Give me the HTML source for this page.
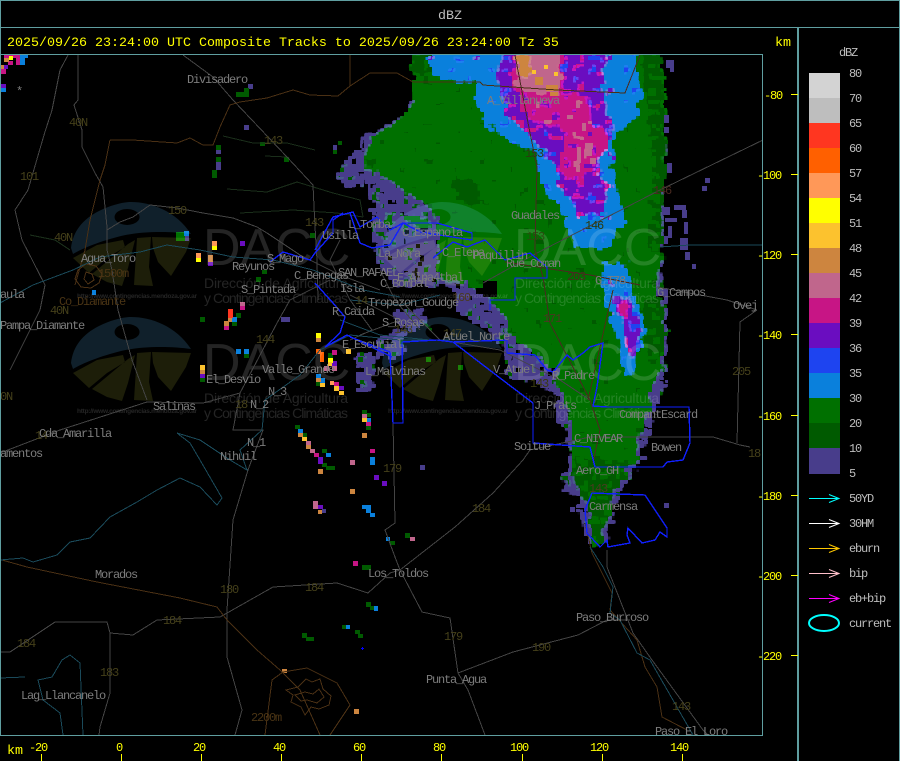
<!DOCTYPE html>
<html><head><meta charset="utf-8"><title>dBZ</title>
<style>
html,body{margin:0;padding:0;background:#000;width:900px;height:761px;overflow:hidden}
svg{display:block}
text{font-family:"Liberation Mono",monospace;white-space:pre}
.l{font-size:12px;letter-spacing:-1.2px;fill:#7d7d7d}
.n{font-size:12px;letter-spacing:-1.2px;fill:#45401a}
.br{font-size:12px;letter-spacing:-1.2px;fill:#4a3414}
.y{font-size:12px;letter-spacing:-1.2px;fill:#ffff00}
.t{font-size:13.33px;fill:#ffff00}
.k{font-size:12px;letter-spacing:-1.2px;fill:#bebebe}
.w{font-family:"Liberation Sans",sans-serif;fill:#fff;fill-opacity:.14;letter-spacing:0}
.c polyline,.c path,.c polygon{fill:none}
.logo{mix-blend-mode:screen}
</style></head><body>
<svg xmlns="http://www.w3.org/2000/svg" width="900" height="761" viewBox="0 0 900 761">
<defs>
<filter id="px" x="0" y="0" width="900" height="761" filterUnits="userSpaceOnUse" color-interpolation-filters="sRGB">
<feTurbulence type="fractalNoise" baseFrequency="0.11" numOctaves="1" seed="11" result="n"/>
<feDisplacementMap in="SourceGraphic" in2="n" scale="15" xChannelSelector="R" yChannelSelector="G" result="d"/>
<feFlood x="1" y="1" width="2" height="2" flood-color="#000"/>
<feComposite width="4" height="4"/>
<feTile result="t"/>
<feComposite in="d" in2="t" operator="in"/>
<feMorphology operator="dilate" radius="1"/>
</filter>
<pattern id="pm" width="40" height="32" patternUnits="userSpaceOnUse">
<rect width="40" height="32" fill="#c71585"/>
<path fill="#6a0dc0" d="M4 0h4v4H4zM24 4h8v4h-8zM12 16h4v4h-4zM32 20h4v4h-4z"/>
<path fill="#c0668c" d="M16 4h4v8h-4zM28 24h4v4h-4z"/>
</pattern>
<pattern id="pb" width="44" height="32" patternUnits="userSpaceOnUse">
<rect width="44" height="32" fill="#6a0dc0"/>
<path fill="#c71585" d="M0 0h12v4H0zM24 8h8v4h-8zM8 20h4v8H8zM32 24h8v4h-8z"/>
<path fill="#1e44f0" d="M16 4h8v4h-8zM36 0h4v8h-4zM0 12h4v4H0zM20 24h8v4h-8z"/>
</pattern>
<pattern id="pl" width="44" height="32" patternUnits="userSpaceOnUse">
<rect width="44" height="32" fill="#0a80dc"/>
<path fill="#1e44f0" d="M8 4h4v4H8zM28 12h4v4h-4zM16 24h8v4h-8z"/>
<path fill="#6a0dc0" d="M36 24h4v4h-4z"/>
</pattern>
<pattern id="pg" width="56" height="40" patternUnits="userSpaceOnUse">
<rect width="56" height="40" fill="#007000"/>
<path fill="#005a00" d="M8 8h4v4H8zM32 0h8v4h-8zM20 28h4v4h-4zM44 20h4v4h-4z"/>
</pattern>
<pattern id="pd" width="24" height="24" patternUnits="userSpaceOnUse">
<rect width="24" height="24" fill="#005a00"/>
<path fill="#007000" d="M4 4h8v4H4zM16 12h4v8h-4zM0 16h8v4H0z"/>
</pattern>
<pattern id="ps" width="32" height="28" patternUnits="userSpaceOnUse">
<rect width="32" height="28" fill="#483d8b"/>
<path fill="#000" d="M4 4h8v4H4zM20 16h4v4h-4zM0 20h4v4H0z"/>
<path fill="#005a00" d="M20 0h4v8h-4zM8 16h4v4H8zM28 8h4v4h-4zM24 24h4v4h-4z"/>
</pattern>
<g id="logo" class="logo">
<path fill="#10202b" fill-rule="evenodd" d="M0 45C2 28 12 16 28 8C40 2 52-1 60-1C80-1 105 8 120 31C100 28 70 28 50 33C30 38 12 45 2 51ZM56 6a12.500 8 0 1 0 .1 0Z"/>
<path fill="#1d1e09" d="M2 55L26 42L52 37L54 44L36 55L18 70ZM57 41L21 71L36 79L51 83L57 65L64 37ZM66 35L63 82L82 83L78 64L80 34ZM81 34L120 35L115 49L100 73L87 59L82 45Z"/>
</g>
</defs>
<rect width="900" height="761" fill="#000"/>

<!-- radar field -->
<g filter="url(#px)">
<polygon fill="url(#ps)" points="416,50 416,85 405,115 385,128 365,135 358,150 345,160 338,172 342,185 358,187 367,180 372,205 372,240 380,270 395,285 440,285 455,293 457,310 480,325 492,335 505,350 505,375 540,385 555,395 557,420 568,432 572,450 565,470 562,492 578,495 578,510 583,525 588,545 606,545 612,522 622,492 640,465 655,410 665,385 668,340 668,295 662,282 664,200 666,150 662,110 658,50"/>
<polygon fill="url(#ps)" points="396,312 425,310 428,326 410,330 400,330"/>
<polygon fill="url(#ps)" points="380,335 405,332 408,350 395,360 375,358"/>
<polygon fill="url(#ps)" points="358,354 375,352 374,375 368,394 358,392"/>
<polygon fill="url(#pg)" points="412,50 415,93 410,110 402,117 393,125 373,135 367,150 365,170 377,170 393,183 413,197 430,207 440,225 440,280 467,283 490,300 503,317 510,333 537,357 557,373 560,390 572,423 573,447 573,457 572,470 577,490 587,503 590,517 590,543 605,545 605,530 610,517 613,493 622,483 627,470 637,463 638,443 643,423 650,407 652,390 658,377 662,357 665,323 662,307 656,283 662,250 662,200 665,167 665,83 660,50"/>
<polygon fill="#007000" points="402,215 428,217 432,228 408,226"/>
<polygon fill="#007000" points="384,216 394,214 392,226 384,224"/>
<polygon fill="url(#pd)" points="412,50 430,50 432,72 420,78 414,74"/>
<polygon fill="url(#pd)" points="642,50 660,50 664,100 666,170 662,205 662,250 650,250 652,190 650,130 644,90"/>
<polygon fill="url(#pd)" points="577,458 637,460 637,466 627,470 622,483 613,493 610,517 605,532 605,545 590,545 590,517 587,503 577,490 572,470"/>
<polygon fill="#005a00" points="453,177 477,180 478,207 456,200"/>
<polygon fill="url(#pd)" points="640,300 664,300 665,345 650,370 645,330"/>
<polygon fill="url(#pl)" points="430,50 430,67 433,73 445,80 477,82 477,100 482,117 493,130 513,143 537,153 540,177 547,190 557,207 568,217 567,230 577,247 610,247 617,233 625,217 617,190 610,167 613,140 617,130 637,117 640,97 637,50"/>
<polygon fill="url(#pl)" points="602,263 627,263 632,295 640,308 644,323 642,345 636,352 632,375 626,377 620,352 615,330 608,310"/>
<polygon fill="url(#pb)" points="503,50 497,77 507,100 507,117 530,133 543,150 557,167 558,183 568,200 580,217 603,217 607,183 597,167 613,133 610,117 603,100 603,77 607,50"/>
<polygon fill="url(#pb)" points="612,296 628,298 638,318 640,340 632,358 626,350 622,325"/>
<polygon fill="url(#pm)" points="517,50 513,80 520,100 527,117 565,130 563,150 560,167 563,180 583,180 593,167 607,150 607,133 590,117 590,100 563,95 563,50"/>
<polygon fill="#c71585" points="616,300 626,300 630,318 622,318"/>
<polygon fill="#c0668c" points="517,50 517,85 525,95 560,95 560,50"/>
<polygon fill="#cd853f" points="518,55 530,55 530,75 518,75"/>
</g>
<!-- holes and orange spots -->
<path fill="#000" d="M483 281h14v16h-14zM476 288h7v6h-7zM405 230h4v4h-4zM418 262h4v4h-4zM432 278h4v4h-4zM516 350h4v4h-4zM540 367h4v4h-4z"/>
<path fill="#483d8b" d="M471 290h5v5h-5zM480 297h5v5h-5zM662 207h8v8h-8zM674 205h12v5h-12zM682 210h5v8h-5zM665 218h12v4h-12zM684 222h4v12h-4zM680 238h8v12h-8zM685 252h5v8h-5zM668 226h4v12h-4zM664 236h4v8h-4zM692 264h4v5h-4zM666 60h8v8h-8zM670 68h4v4h-4zM664 115h5v8h-5zM664 127h5v6h-5zM667 163h5v10h-5zM354 150h8v6h-8zM340 172h12v5h-12z"/>
<path fill="#fcc22e" d="M532 70h4v4h-4zM544 65h4v4h-4zM554 72h4v4h-4z"/>
<path fill="#cd853f" d="M535 77h8v8h-8zM546 85h12v6h-12zM550 92h8v4h-8z"/>
<path fill="#c0668c" d="M577 147h4v16h-4zM585 143h8v6h-8zM590 158h6v6h-6zM567 115h6v4h-6zM582 123h4v8h-4z"/>

<!-- scattered cells -->
<path fill="#483d8b" d="M248 84h5v5h-5zM244 125h5v5h-5zM216 150h5v4h-5zM216 162h5v8h-5zM333 145h4v5h-4zM184 236h5v5h-5zM281 317h9v5h-9zM420 465h5v5h-5zM570 507h5v5h-5zM705 178h5v5h-5zM702 186h5v5h-5zM322 509h4v4h-4zM664 503h5v5h-5z"/>
<path fill="#005a00" d="M236 92h13v5h-13zM244 88h5v5h-5zM216 145h5v5h-5zM216 157h5v5h-5zM212 170h5v8h-5zM260 142h5v4h-5zM284 157h5v5h-5zM338 141h4v4h-4zM333 150h4v4h-4zM262 270h5v4h-5zM256 277h5v5h-5zM310 233h5v5h-5zM236 313h5v5h-5zM232 322h5v4h-5zM200 317h5v5h-5zM244 354h5v4h-5zM200 378h5v4h-5zM328 353h5v5h-5zM316 378h5v8h-5zM362 410h5v4h-5zM366 413h5v4h-5zM366 426h5v4h-5zM295 425h5v4h-5zM302 433h5v4h-5zM322 449h5v4h-5zM358 357h5v5h-5zM322 463h5v4h-5zM326 466h9v4h-9zM390 541h5v4h-5zM405 533h5v5h-5zM362 565h9v5h-9zM366 602h5v5h-5zM370 606h4v4h-4zM342 625h4v4h-4zM355 630h5v4h-5zM358 634h5v4h-5zM302 633h5v5h-5zM306 637h8v4h-8z"/>
<path fill="#007000" d="M176 232h9v9h-9zM426 357h5v5h-5zM458 365h5v5h-5z"/>
<path fill="#0a80dc" d="M184 231h5v5h-5zM232 317h5v5h-5zM236 349h5v5h-5zM244 349h5v5h-5zM316 374h5v4h-5zM320 378h5v5h-5zM366 418h5v4h-5zM298 429h5v4h-5zM326 453h5v4h-5zM370 457h5v8h-5zM362 505h9v4h-9zM366 509h5v4h-5zM370 513h5v4h-5zM386 537h4v4h-4zM374 606h4v5h-4zM346 625h4v4h-4zM92 290h4v5h-4zM20 55h8v3h-8zM20 58h5v7h-5zM1 88h5v4H1z"/>
<path fill="#c71585" d="M240 306h5v4h-5zM224 326h5v4h-5zM334 382h5v4h-5zM366 422h5v4h-5zM314 453h5v4h-5zM370 449h5v4h-5zM353 561h5v5h-5zM4 55h16v3H4zM8 61h5v4H8zM16 58h4v7h-4zM1 69h5v5H1zM332 350h5v5h-5z"/>
<path fill="#6a0dc0" d="M240 241h5v5h-5zM208 262h5v4h-5zM200 374h5v4h-5zM332 361h5v5h-5zM339 386h5v4h-5zM318 457h5v7h-5zM374 475h5v5h-5zM382 481h5v5h-5zM318 505h5v4h-5zM4 65h4v4H4zM1 84h5v4H1z"/>
<path fill="#ff9858" d="M212 241h5v5h-5zM196 253h5v5h-5zM330 381h4v4h-4z"/>
<path fill="#ffff00" d="M212 246h5v4h-5zM196 258h5v4h-5zM316 333h5v5h-5zM328 358h5v5h-5zM9 56h4v4H9z"/>
<path fill="#cd853f" d="M208 255h5v7h-5zM316 338h5v4h-5zM228 318h4v4h-4zM224 321h5v5h-5zM200 370h5v4h-5zM316 378h5v4h-5zM362 433h5v5h-5zM298 433h5v4h-5zM306 445h5v4h-5zM350 489h5v5h-5zM318 469h5v5h-5zM318 510h4v4h-4zM282 669h5v4h-5zM354 709h5v5h-5zM1 65h3v4H1zM4 58h5v4H4z"/>
<path fill="#c0668c" d="M240 302h5v4h-5zM332 366h5v5h-5zM324 366h5v5h-5zM362 414h5v4h-5zM306 441h5v4h-5zM310 449h5v4h-5zM350 460h5v5h-5zM313 501h5v8h-5zM410 537h5v4h-5z"/>
<path fill="#fcc22e" d="M200 365h5v5h-5zM328 362h4v4h-4zM320 383h5v4h-5zM334 386h5v5h-5zM339 391h5v4h-5zM346 349h5v5h-5zM362 418h5v4h-5zM302 437h5v4h-5z"/>
<path fill="#ff3620" d="M228 309h5v9h-5z"/>
<path fill="#ff6000" d="M316 349h5v5h-5zM320 352h4v10h-4z"/>
<path fill="#0000ff" d="M362 647h1v1h-1zM361 648h3v1h-3zM362 649h1v1h-1z"/>

<!-- watermarks -->
<use href="#logo" x="71" y="203"/>
<use href="#logo" x="71" y="318"/>
<use href="#logo" x="382" y="203"/>
<use href="#logo" x="382" y="318"/>
<text class="w" x="203" y="265" font-size="52">DACC</text>
<text class="w" x="203" y="380" font-size="52">DACC</text>
<text class="w" x="514" y="265" font-size="52">DACC</text>
<text class="w" x="514" y="380" font-size="52">DACC</text>
<text class="w" x="204" y="288" font-size="14" textLength="144">Dirección de Agricultura</text>
<text class="w" x="204" y="303" font-size="14" textLength="144">y Contingencias Climáticas</text>
<text class="w" x="204" y="403" font-size="14" textLength="144">Dirección de Agricultura</text>
<text class="w" x="204" y="418" font-size="14" textLength="144">y Contingencias Climáticas</text>
<text class="w" x="515" y="288" font-size="14" textLength="144">Dirección de Agricultura</text>
<text class="w" x="515" y="303" font-size="14" textLength="144">y Contingencias Climáticas</text>
<text class="w" x="515" y="403" font-size="14" textLength="144">Dirección de Agricultura</text>
<text class="w" x="515" y="418" font-size="14" textLength="144">y Contingencias Climáticas</text>
<text class="w" x="77" y="298" font-size="6.5" font-weight="bold" textLength="120">http://www.contingencias.mendoza.gov.ar</text>
<text class="w" x="77" y="413" font-size="6.5" font-weight="bold" textLength="120">http://www.contingencias.mendoza.gov.ar</text>
<text class="w" x="388" y="298" font-size="6.5" font-weight="bold" textLength="120">http://www.contingencias.mendoza.gov.ar</text>
<text class="w" x="388" y="413" font-size="6.5" font-weight="bold" textLength="120">http://www.contingencias.mendoza.gov.ar</text>

<!-- map lines -->
<g class="c" stroke-width="1" shape-rendering="crispEdges">
<g stroke="#1a2e1a">
<polyline points="223,136 253,143 287,143 315,150"/><polyline points="265,156 287,157"/>
<polyline points="227,189 267,192 297,182 333,193 360,200 363,217"/><polyline points="240,213 293,210 337,213 363,217"/>
<polyline points="30,235 55,240 70,250"/>
</g>
<g stroke="#444444">
<polyline points="78,55 78,100 74,105 82,130 82,147 95,173 103,187 107,227 107,250 112,270 118,310 132,360 147,400"/>
<polyline points="68,55 60,70 52,110 44,135 28,190 15,210 22,240 45,285 40,310 10,370"/>
<polyline points="183,55 213,77 233,100 287,157 313,185 315,227 317,260 318,300"/>
<polyline points="107,230 120,222 133,217 150,205 177,208 203,213 233,218 257,227 267,233 300,255 340,275 380,290"/>
<polyline points="0,453 60,430 147,402 203,403 240,393 277,323 290,300 310,290 330,280"/>
<polyline points="240,393 233,430 263,430 248,470 233,520 227,610 227,657 242,710 235,735"/>
<polyline points="0,652 10,652 55,622 107,622 110,633 133,635 157,620 220,617 273,587 337,583 368,593 390,573 400,570 455,527 493,493 523,460 530,450 590,437 713,437 740,445 750,447"/>
<polyline points="110,633 110,693 100,727 99,735"/>
<polyline points="393,423 395,523 385,530 395,557 400,570 422,612 450,618 458,673 468,690 485,735"/>
<polyline points="458,673 513,652 578,635 607,620 630,620"/>
<polyline points="483,283 537,253 660,190 763,140"/>
<polyline points="607,550 607,567 633,633 652,660 703,730 708,735"/>
<polyline points="657,287 727,300 757,310"/><polyline points="737,443 740,322 757,310"/>
<polyline points="340,240 330,260 350,300 372,330 350,340"/><polyline points="400,300 440,340 500,350 560,380 590,400"/><polyline points="380,270 395,300 420,330"/><polyline points="350,295 400,320 360,335"/>
</g>
<g stroke="#4a3014">
<polyline points="110,140 133,140 177,143 190,138 203,145 213,145 220,127 230,105 240,102 267,98 293,90 310,95 338,96 350,86 370,73 397,73 413,82 480,82 483,85 557,90 625,93 640,55"/>
<polyline points="350,55 350,86"/>
<polyline points="110,140 105,165 100,180 90,220 85,250 75,285"/>
<polyline points="2,560 27,567 97,582 180,598 217,607 227,620 257,650 280,670 300,690 320,735"/>
<polyline points="283,672 307,668 337,683 350,705 330,735"/><polyline points="283,672 272,680 265,735"/>
<path d="M286 690l12-3 8-8 6 3 8-3 3 10 8 7-2 9-10 4-8-2-6 8-4-8-10-5 2-7z"/>
<path d="M295 695l10-3 8 2 6-5 5 8-7 6-10-3-6 1z"/>
<path d="M78 270l8-6 10 2 6 8-3 9-8 5-10-1-6-8z"/>
<path d="M86 272l6 2 2 6-6 4-4-5z"/>
<polyline points="585,523 592,553 612,593 610,610 637,640 645,667 657,687 662,717 687,730"/>
<polyline points="613,290 588,400"/>
</g>
<g stroke="#4a2a20">
<polyline points="515,55 530,133 537,167 535,250 543,277 550,323 590,400 600,430 593,463"/>
<polyline points="640,55 625,93"/>
<polyline points="505,262 590,275 640,285"/>
</g>
<g stroke="#1a4a5a">
<polyline points="0,303 33,285 73,270 100,257 140,252 167,245 200,250 233,257 273,260 313,270 363,290 400,297"/>
<polyline points="0,560 23,558 33,562 57,555 70,542 90,538 110,517 137,502 157,490 180,478 200,487 217,505 222,498 200,460 190,443 177,433 200,440 230,460 247,470 240,450 262,430 265,400 300,375 320,350 350,335 400,340 450,340"/>
<polyline points="0,678 25,677"/>
<polyline points="63,735 60,713 43,700 38,680 52,677 62,660 70,655 80,663 83,735"/>
<polyline points="590,547 603,567 613,587 610,613 620,620 637,653 650,660 693,735"/>
<polyline points="660,247 690,245 762,245"/>
<polyline points="340,320 380,335 430,340"/><polyline points="350,300 400,305 440,295"/>
</g>
<g stroke="#1020ff" stroke-width="1.4">
<polyline points="315,250 333,217 353,212 360,227 377,217 390,230 403,223 437,223 472,233 472,240 420,232 403,223 390,245 372,248 360,243 350,213"/>
<polyline points="433,258 453,242 467,247 485,240 505,260 530,253 547,267 547,278 515,278 515,300 490,300 490,310"/>
<polyline points="350,337 390,352 393,423 403,423 402,342 437,340 453,342 500,378 533,403 533,443 590,447 595,467 663,467 667,462 683,460 690,443 689,407 607,407 593,406 597,387 603,343 590,347 583,353 573,360 567,355 553,372 547,370 535,355 507,353 507,340 453,342"/>
<polyline points="270,262 283,252 310,260 315,253 333,233 333,220 343,213"/>
<polyline points="315,283 333,303 345,317 340,333 325,347 347,335 392,357"/>
<polygon points="592,493 645,495 667,528 667,537 660,532 655,540 642,543 628,528 627,535 630,543 608,547 607,540 600,547 587,533 585,510"/>
</g>
</g>

<!-- route numbers -->
<text class="n" x="69" y="126">40N</text><text class="n" x="20" y="180">101</text><text class="n" x="264" y="144">143</text>
<text class="n" x="168" y="214">150</text><text class="n" x="305" y="226">143</text><text class="n" x="54" y="241">40N</text>
<text class="n" x="50" y="314">40N</text><text class="n" x="0" y="400">0N</text><text class="n" x="355" y="304">14</text>
<text class="n" x="256" y="343">144</text><text class="n" x="394" y="333">143</text><text class="n" x="443" y="337">147</text>
<text class="n" x="732" y="375">205</text><text class="n" x="748" y="457">18</text><text class="n" x="383" y="472">179</text>
<text class="n" x="472" y="512">184</text><text class="n" x="235" y="408">18</text><text class="n" x="220" y="593">180</text>
<text class="n" x="305" y="591">184</text><text class="n" x="163" y="624">184</text><text class="n" x="17" y="647">184</text>
<text class="n" x="100" y="676">183</text><text class="n" x="444" y="640">179</text><text class="n" x="532" y="651">190</text>
<text class="n" x="672" y="710">143</text><text class="n" x="35" y="439">14</text>
<text class="n" x="525" y="157" style="fill:#2c3a10">153</text><text class="n" x="653" y="194" style="fill:#4a2a20">146</text>
<text class="n" x="585" y="229" style="fill:#2c3a10">146</text><text class="n" x="526" y="240" style="fill:#2c4a10">153</text>
<text class="n" x="567" y="280" style="fill:#4a2a20">203</text><text class="n" x="543" y="322" style="fill:#4a3a20">171</text>
<text class="n" x="530" y="387" style="fill:#3a3a10">143</text><text class="n" x="589" y="492" style="fill:#4a3a20">143</text>
<text class="n" x="452" y="301" style="fill:#4a3a20">160</text>
<text class="br" x="98" y="277">1500m</text><text class="br" x="59" y="305">Co_Diamante</text><text class="br" x="251" y="721">2200m</text>

<!-- place labels -->
<text class="l" x="187" y="83">Divisadero</text><text class="l" x="16" y="95">*</text>
<text class="l" x="487" y="104">A_Villanueva</text><text class="l" x="511" y="219">Guadales</text>
<text class="l" x="595" y="284">G_T78</text><text class="l" x="657" y="296">G_Campos</text>
<text class="l" x="733" y="309">Ovej</text>
<text class="l" x="348" y="228">L_Tomba</text><text class="l" x="402" y="236">C_Espanola</text>
<text class="l" x="378" y="257">La_Nora</text><text class="l" x="442" y="256">C_Elepa</text>
<text class="l" x="473" y="259">Paquillin</text><text class="l" x="506" y="267">Rue_Coman</text>
<text class="l" x="338" y="276">SAN_RAFAEL</text><text class="l" x="397" y="281">E_Alpa4tbal</text>
<text class="l" x="380" y="287">C_Bombal</text><text class="l" x="368" y="306">Tropezon_Goudge</text>
<text class="l" x="322" y="239">Usilla</text><text class="l" x="232" y="270">Reyunos</text><text class="l" x="267" y="262">S_Mago</text>
<text class="l" x="294" y="279">C_Benegas</text><text class="l" x="241" y="293">S_Pintada</text><text class="l" x="340" y="292">Isla</text>
<text class="l" x="332" y="315">R_Caida</text><text class="l" x="382" y="326">S_Rosas</text><text class="l" x="443" y="340">Atuel_Norte</text>
<text class="l" x="342" y="348">E_Escurial</text><text class="l" x="365" y="375">L_Malvinas</text>
<text class="l" x="493" y="373">V_Atuel</text><text class="l" x="552" y="379">R_Padre</text><text class="l" x="534" y="409">J_Prats</text>
<text class="l" x="619" y="418">CompantEscard</text><text class="l" x="574" y="442">C_NIVEAR</text>
<text class="l" x="514" y="450">Soitue</text><text class="l" x="651" y="451">Bowen</text><text class="l" x="576" y="474">Aero_GH</text>
<text class="l" x="589" y="510">Carmensa</text><text class="l" x="368" y="577">Los_Toldos</text>
<text class="l" x="576" y="621">Paso_Burroso</text><text class="l" x="426" y="683">Punta_Agua</text><text class="l" x="655" y="735">Paso_El_Loro</text>
<text class="l" x="95" y="578">Morados</text><text class="l" x="21" y="699">Lag_Llancanelo</text><text class="l" x="153" y="410">Salinas</text>
<text class="l" x="39" y="437">Cda_Amarilla</text><text class="l" x="0" y="457">amentos</text>
<text class="l" x="247" y="446">N_1</text><text class="l" x="250" y="408">N_2</text><text class="l" x="268" y="395">N_3</text>
<text class="l" x="220" y="460">Nihuil</text><text class="l" x="206" y="383">El_Desvio</text><text class="l" x="262" y="373">Valle_Grande</text>
<text class="l" x="81" y="262">Agua_Toro</text><text class="l" x="0" y="329">Pampa_Diamante</text><text class="l" x="0" y="298">aula</text>

<!-- frames: black out margins then draw -->
<rect x="763" y="55" width="35" height="706" fill="#000"/>
<rect x="0" y="736" width="798" height="25" fill="#000"/>
<rect x="0" y="28" width="797" height="26" fill="#000"/>
<g fill="#5f9ea0">
<rect x="0" y="0" width="900" height="1"/>
<rect x="0" y="27" width="900" height="1"/>
<rect x="0" y="54" width="763" height="1"/>
<rect x="0" y="0" width="1" height="736"/>
<rect x="762" y="54" width="1" height="682"/>
<rect x="0" y="735" width="763" height="1"/>
<rect x="797" y="28" width="2" height="733"/>
<rect x="899" y="0" width="1" height="761"/>
</g>

<!-- header -->
<text x="438" y="19" font-size="13.33" fill="#bebebe">dBZ</text>
<text class="t" x="7" y="46">2025/09/26 23:24:00 UTC Composite Tracks to 2025/09/26 23:24:00 Tz 35</text>
<text class="t" x="775" y="46">km</text>
<text class="t" x="7" y="754">km</text>

<!-- axes -->
<path stroke="#ffff00" fill="none" d="M791 94.500h7M791 174.500h7M791 254.500h7M791 334.500h7M791 415.500h7M791 495.500h7M791 575.500h7M791 655.500h7M41.500 754v7M121.500 754v7M201.500 754v7M281.500 754v7M361.500 754v7M441.500 754v7M522.500 754v7M602.500 754v7M682.500 754v7"/>
<text class="y" x="764" y="99">-80</text><text class="y" x="757" y="179">-100</text><text class="y" x="757" y="259">-120</text>
<text class="y" x="757" y="339">-140</text><text class="y" x="757" y="420">-160</text><text class="y" x="757" y="500">-180</text>
<text class="y" x="757" y="580">-200</text><text class="y" x="757" y="660">-220</text>
<text class="y" x="29" y="751">-20</text><text class="y" x="116" y="751">0</text><text class="y" x="193" y="751">20</text><text class="y" x="273" y="751">40</text>
<text class="y" x="353" y="751">60</text><text class="y" x="433" y="751">80</text><text class="y" x="510" y="751">100</text><text class="y" x="590" y="751">120</text><text class="y" x="670" y="751">140</text>

<!-- legend -->
<text class="k" x="839" y="56">dBZ</text>
<rect x="809" y="73" width="31" height="25" fill="#d3d3d3"/>
<rect x="809" y="98" width="31" height="25" fill="#bebebe"/>
<rect x="809" y="123" width="31" height="25" fill="#ff3620"/>
<rect x="809" y="148" width="31" height="25" fill="#ff6000"/>
<rect x="809" y="173" width="31" height="25" fill="#ff9858"/>
<rect x="809" y="198" width="31" height="25" fill="#ffff00"/>
<rect x="809" y="223" width="31" height="25" fill="#fcc22e"/>
<rect x="809" y="248" width="31" height="25" fill="#cd853f"/>
<rect x="809" y="273" width="31" height="25" fill="#c0668c"/>
<rect x="809" y="298" width="31" height="25" fill="#c71585"/>
<rect x="809" y="323" width="31" height="25" fill="#6a0dc0"/>
<rect x="809" y="348" width="31" height="25" fill="#1e44f0"/>
<rect x="809" y="373" width="31" height="25" fill="#0a80dc"/>
<rect x="809" y="398" width="31" height="25" fill="#007000"/>
<rect x="809" y="423" width="31" height="25" fill="#005a00"/>
<rect x="809" y="448" width="31" height="26" fill="#483d8b"/>
<text class="k" x="849" y="77">80</text><text class="k" x="849" y="102">70</text><text class="k" x="849" y="127">65</text>
<text class="k" x="849" y="152">60</text><text class="k" x="849" y="177">57</text><text class="k" x="849" y="202">54</text>
<text class="k" x="849" y="227">51</text><text class="k" x="849" y="252">48</text><text class="k" x="849" y="277">45</text>
<text class="k" x="849" y="302">42</text><text class="k" x="849" y="327">39</text><text class="k" x="849" y="352">36</text>
<text class="k" x="849" y="377">35</text><text class="k" x="849" y="402">30</text><text class="k" x="849" y="427">20</text>
<text class="k" x="849" y="452">10</text><text class="k" x="849" y="477">5</text>
<g fill="none">
<path stroke="#00ffff" d="M809 498.500h30M829 494.500l10 4-10 4"/>
<path stroke="#ffffff" d="M809 523.500h30M829 519.500l10 4-10 4"/>
<path stroke="#ffc800" d="M809 548.500h30M829 544.500l10 4-10 4"/>
<path stroke="#ffc0cb" d="M809 573.500h30M829 569.500l10 4-10 4"/>
<path stroke="#ff00ff" d="M809 598.500h30M829 594.500l10 4-10 4"/>
<ellipse cx="824" cy="623" rx="15" ry="8" stroke="#00ffff" stroke-width="2"/>
</g>
<text class="k" x="849" y="502">50YD</text><text class="k" x="849" y="527">30HM</text><text class="k" x="849" y="552">eburn</text>
<text class="k" x="849" y="577">bip</text><text class="k" x="849" y="602">eb+bip</text><text class="k" x="849" y="627">current</text>
</svg>
</body></html>
